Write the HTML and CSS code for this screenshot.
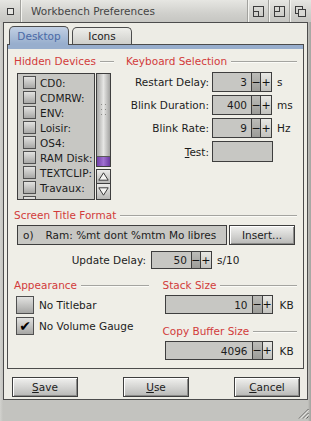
FILE: index.html
```html
<!DOCTYPE html>
<html>
<head>
<meta charset="utf-8">
<title>Workbench Preferences</title>
<link rel="stylesheet" href="styles.css">
</head>
<body>
<div class="win">
  <div class="titlebar">
    <div class="tgad close"><span class="sq"></span></div>
    <div class="title">Workbench Preferences</div>
    <div class="tgad"><svg width="11" height="11" viewBox="0 0 11 11"><rect x="0.5" y="0.5" width="10" height="10"/><rect x="0.5" y="5.5" width="5" height="5"/></svg></div>
    <div class="tgad"><svg width="11" height="11" viewBox="0 0 11 11"><rect x="0.5" y="0.5" width="10" height="10"/><rect x="0.5" y="0.5" width="5" height="5"/></svg></div>
    <div class="tgad"><svg width="11" height="11" viewBox="0 0 11 11"><rect x="0.5" y="0.5" width="7" height="7"/><rect class="front" x="3.5" y="3.5" width="7" height="7"/></svg></div>
  </div>
  <div class="client">
    <div class="tabs">
      <div class="tab active">Desktop</div>
      <div class="tab">Icons</div>
    </div>
    <div class="page">
      <div class="strip"></div>
      <div class="top">
        <div class="lcol">
          <div class="hdr">Hidden Devices</div>
          <div class="listwrap">
            <div class="list">
              <div class="lrow"><span class="lcb"></span>CD0:</div>
              <div class="lrow"><span class="lcb"></span>CDMRW:</div>
              <div class="lrow"><span class="lcb"></span>ENV:</div>
              <div class="lrow"><span class="lcb"></span>Loisir:</div>
              <div class="lrow"><span class="lcb"></span>OS4:</div>
              <div class="lrow"><span class="lcb"></span>RAM Disk:</div>
              <div class="lrow"><span class="lcb"></span>TEXTCLIP:</div>
              <div class="lrow"><span class="lcb"></span>Travaux:</div>
              <div class="lrow"><span class="lcb"></span></div>
            </div>
            <div class="scroll">
              <div class="track">
                <div class="knob"><svg width="5" height="11" viewBox="0 0 5 11"><g fill="#8e8e8a"><rect x="0" y="0" width="1" height="1"/><rect x="4" y="0" width="1" height="1"/><rect x="0" y="5" width="1" height="1"/><rect x="4" y="5" width="1" height="1"/><rect x="0" y="10" width="1" height="1"/><rect x="4" y="10" width="1" height="1"/></g></svg></div>
                <div class="rest"></div>
              </div>
              <div class="arr up"><svg width="11" height="9" viewBox="0 0 11 9"><path d="M5.5 0.8 L10.2 8.2 L0.8 8.2 Z"/></svg></div>
              <div class="arr down"><svg width="11" height="9" viewBox="0 0 11 9"><path d="M0.8 0.8 L10.2 0.8 L5.5 8.2 Z"/></svg></div>
            </div>
          </div>
        </div>
        <div class="rcol">
          <div class="hdr kb">Keyboard Selection</div>
          <div class="form">
            <div class="frow"><span class="flabel">Restart Delay:</span><div class="spin"><span class="sbox">3</span><span class="sbtn minus">−</span><span class="sbtn plus">+</span></div><span class="unit">s</span></div>
            <div class="frow"><span class="flabel">Blink Duration:</span><div class="spin"><span class="sbox">400</span><span class="sbtn minus">−</span><span class="sbtn plus">+</span></div><span class="unit">ms</span></div>
            <div class="frow"><span class="flabel">Blink Rate:</span><div class="spin"><span class="sbox">9</span><span class="sbtn minus">−</span><span class="sbtn plus">+</span></div><span class="unit">Hz</span></div>
            <div class="frow test"><span class="flabel"><u>T</u>est:</span><span class="tbox"></span></div>
          </div>
        </div>
      </div>
      <div class="sect">
        <div class="hdr">Screen Title Format</div>
        <div class="strow">
          <div class="field">o)<span class="gapw">Ram: %mt dont %mtm Mo libres</span></div>
          <div class="btn ins">Insert...</div>
        </div>
        <div class="udrow">
          <span class="ulabel">Update Delay:</span>
          <div class="spin sm"><span class="sbox">50</span><span class="sbtn minus">−</span><span class="sbtn plus">+</span></div>
          <span class="unit">s/10</span>
        </div>
      </div>
      <div class="bottom">
        <div class="bcol">
          <div class="hdr">Appearance</div>
          <div class="cbrow first"><span class="cb"></span>No Titlebar</div>
          <div class="cbrow"><span class="cb on">✔</span>No Volume Gauge</div>
        </div>
        <div class="bcol">
          <div class="hdr">Stack Size</div>
          <div class="wrow"><div class="spin wide"><span class="sbox">10</span><span class="sbtn minus">−</span><span class="sbtn plus">+</span></div><span class="unit">KB</span></div>
          <div class="hdr h2">Copy Buffer Size</div>
          <div class="wrow"><div class="spin wide"><span class="sbox">4096</span><span class="sbtn minus">−</span><span class="sbtn plus">+</span></div><span class="unit">KB</span></div>
        </div>
      </div>
    </div>
    <div class="buttons">
      <div class="btn pb"><u>S</u>ave</div>
      <div class="btn pb"><u>U</u>se</div>
      <div class="btn pb"><u>C</u>ancel</div>
    </div>
  </div>
  <div class="bframe">
    <svg width="11" height="11" viewBox="0 0 11 11"><g stroke="#5a5a58" stroke-width="1"><path d="M10.5 1 L1 10.5"/><path d="M10.5 5 L5 10.5"/><path d="M10.5 8.5 L8.5 10.5"/></g><g stroke="#f2f2ee" stroke-width="1"><path d="M10.5 2.2 L2.2 10.5"/><path d="M10.5 6.2 L6.2 10.5"/></g></svg>
  </div>
</div>
</body>
</html>
```

FILE: styles.css
```css
* { box-sizing: border-box; margin: 0; padding: 0; }
html, body { width: 311px; height: 421px; overflow: hidden; }
body {
  font-family: "DejaVu Sans", sans-serif;
  font-size: 10.5px;
  color: #1c1c1c;
  background: #c4c4c0;
}
.win {
  width: 311px;
  height: 421px;
  display: flex;
  flex-direction: column;
  background: linear-gradient(90deg, #d2d2ce 0, #c3c3bf 3px, #c3c3bf 308px, #a8a8a4 310px);
}
.titlebar {
  flex: none;
  height: 22px;
  display: flex;
  background: linear-gradient(#e6e6e2, #d0d0cc 60%, #c6c6c2);
  padding-right: 1px;
}
.tgad {
  width: 21px;
  display: flex;
  align-items: center;
  justify-content: center;
  border-left: 1px solid #a2a29e;
  box-shadow: inset 1px 0 #f4f4f0;
}
.tgad svg rect { fill: none; stroke: #3c3c3c; stroke-width: 1; }
.tgad svg rect.front { fill: #d8d8d4; }
.tgad.close {
  border-left: none;
  box-shadow: none;
  border-right: 1px solid #a2a29e;
}
.tgad .sq {
  width: 7px;
  height: 7px;
  border: 1px solid #3c3c3c;
  background: #e4e4e0;
}
.title {
  flex: 1;
  padding-left: 10px;
  line-height: 22px;
  color: #454545;
  box-shadow: inset 1px 0 #f4f4f0;
}
.client {
  flex: none;
  height: 378px;
  margin: 0 3px;
  border: 1px solid #4c4c4c;
  background: #edece5;
  display: flex;
  flex-direction: column;
}
.tabs {
  height: 21px;
  display: flex;
  align-items: flex-end;
  gap: 3px;
  padding-left: 5px;
}
.tab {
  width: 60px;
  height: 17px;
  border: 1px solid #4c4c4c;
  border-bottom: none;
  border-radius: 5px 5px 0 0;
  background: linear-gradient(#eeeeea, #cfcfcb);
  display: flex;
  align-items: center;
  justify-content: center;
  color: #1c1c1c;
}
.tab.active {
  height: 18px;
  background: linear-gradient(#c2d0e4, #98aecd);
  color: #4a69a6;
  position: relative;
}
.tab.active::after {
  content: "";
  position: absolute;
  left: 0;
  right: 0;
  bottom: -1px;
  height: 1px;
  background: #98aecd;
}
.page {
  flex: none;
  height: 325px;
  margin: 0 3px;
  border: 1px solid #4c4c4c;
  background: #efeee7;
  padding: 0 6px;
  display: flex;
  flex-direction: column;
}
.strip {
  height: 4px;
  margin: 0 -6px;
  background: #98aecd;
}
.hdr {
  display: flex;
  align-items: center;
  gap: 4px;
  height: 13px;
  line-height: 13px;
  color: #d23b3b;
  white-space: nowrap;
}
.hdr::after {
  content: "";
  flex: 1;
  height: 2px;
  border: none;
  background: linear-gradient(#a4a4a0 0 1px, #fbfbf7 1px 2px);
}
.top {
  display: flex;
  gap: 8px;
  margin-top: 6px;
}
.lcol { width: 100px; }
.rcol { flex: 1; }
.hdr.kb { padding-left: 4px; }
.listwrap {
  display: flex;
  gap: 1px;
  margin-top: 5px;
  padding-left: 3px;
}
.list {
  width: 78px;
  height: 127px;
  border: 1px solid #3e3e3e;
  background: #c7c7c3;
  overflow: hidden;
  padding: 1px 0 0 5px;
}
.lrow {
  height: 15px;
  display: flex;
  align-items: center;
  gap: 4px;
  white-space: nowrap;
}
.lcb {
  flex: none;
  width: 13px;
  height: 13px;
  border: 1px solid #505050;
  background: linear-gradient(#e2e2e0, #a8a8a6);
}
.scroll {
  width: 15px;
  height: 127px;
  display: flex;
  flex-direction: column;
}
.track {
  height: 94px;
  border: 1px solid #3e3e3e;
  display: flex;
  flex-direction: column;
  background: linear-gradient(90deg, #7040a8, #a070d0 50%, #6a3aa0);
}
.knob {
  height: 83px;
  display: flex;
  align-items: center;
  justify-content: center;
  padding-bottom: 12px;
  background: linear-gradient(90deg, #a8a8a6, #e6e6e4 50%, #a4a4a2);
  border-bottom: 1px solid #5a5a58;
}
.rest { flex: 1; }
.arr {
  height: 15px;
  border: 1px solid #3e3e3e;
  background: linear-gradient(#ececea, #b8b8b6);
  display: flex;
  align-items: center;
  justify-content: center;
}
.arr.up { margin-top: 2px; }
.arr.down { height: 16px; border-top: none; }
.arr svg path { fill: #f4f4f2; stroke: #3c3c3c; stroke-width: 1; }
.form {
  margin-top: 4px;
  display: flex;
  flex-direction: column;
  gap: 3px;
}
.frow {
  display: flex;
  align-items: center;
  height: 20px;
}
.flabel {
  width: 87px;
  text-align: right;
  margin-right: 3px;
  white-space: nowrap;
}
.spin {
  display: flex;
  height: 20px;
}
.sbox {
  width: 40px;
  border: 1px solid #3e3e3e;
  background: #c7c7c3;
  text-align: right;
  padding-right: 4px;
  display: flex;
  align-items: center;
  justify-content: flex-end;
}
.sbtn {
  border: 1px solid #3e3e3e;
  border-left: none;
  display: flex;
  align-items: center;
  justify-content: center;
  font-size: 11px;
  color: #111;
}
.sbtn.minus { width: 9px; background: linear-gradient(#bcbcb8, #9c9c98); }
.sbtn.plus { width: 11px; background: linear-gradient(#e8e8e4, #c2c2be); }
.unit { margin-left: 5px; white-space: nowrap; }
.frow.test { height: 21px; }
.tbox {
  width: 61px;
  height: 21px;
  border: 1px solid #3e3e3e;
  background: #c7c7c3;
}
.sect { margin-top: 9px; }
.strow {
  display: flex;
  gap: 2px;
  margin-top: 3px;
  padding-left: 3px;
  height: 20px;
}
.field {
  width: 210px;
  border: 1px solid #3e3e3e;
  background: #c7c7c3;
  padding-left: 5px;
  display: flex;
  align-items: center;
  white-space: nowrap;
}
.gapw { margin-left: 12px; }
.btn {
  border: 1px solid #3e3e3e;
  background: linear-gradient(#f0f0ee, #d2d2d0 55%, #b8b8b6);
  box-shadow: inset 1px 1px #ffffff, inset -1px -1px #8c8c8a;
  display: flex;
  align-items: center;
  justify-content: center;
  white-space: nowrap;
}
.btn.ins { width: 66px; }
.udrow {
  display: flex;
  align-items: center;
  justify-content: center;
  height: 18px;
  margin-top: 6px;
}
.ulabel { margin-right: 5px; }
.spin.sm { height: 18px; }
.spin.sm .sbox { width: 41px; }
.bottom {
  display: flex;
  gap: 14px;
  margin-top: 10px;
}
.bcol { width: 135px; }
.cbrow {
  display: flex;
  align-items: center;
  gap: 5px;
  height: 18px;
  margin-top: 3px;
  padding-left: 2px;
}
.cbrow.first { margin-top: 4px; }
.cb {
  width: 18px;
  height: 18px;
  border: 1px solid #505050;
  background: linear-gradient(#e2e2e0, #a6a6a4);
  display: flex;
  align-items: center;
  justify-content: center;
  font-size: 14px;
  line-height: 1;
  color: #000;
}
.wrow {
  display: flex;
  align-items: center;
  margin-top: 3px;
  padding-left: 2px;
  height: 19px;
}
.spin.wide { height: 19px; }
.spin.wide .sbox { width: 88px; }
.spin.wide .sbtn.minus { width: 10px; }
.spin.wide .sbtn.plus { width: 10px; }
.spin.wide + .unit { margin-left: 7px; }
.hdr.h2 { margin-top: 11px; }
.buttons {
  display: flex;
  justify-content: space-between;
  margin-top: 8px;
  height: 20px;
  padding: 0 7px 0 8px;
}
.btn.pb { width: 66px; }
.bframe {
  flex: 1;
  display: flex;
  justify-content: flex-end;
  align-items: flex-end;
  padding: 0 2px 2px 0;
}
```
